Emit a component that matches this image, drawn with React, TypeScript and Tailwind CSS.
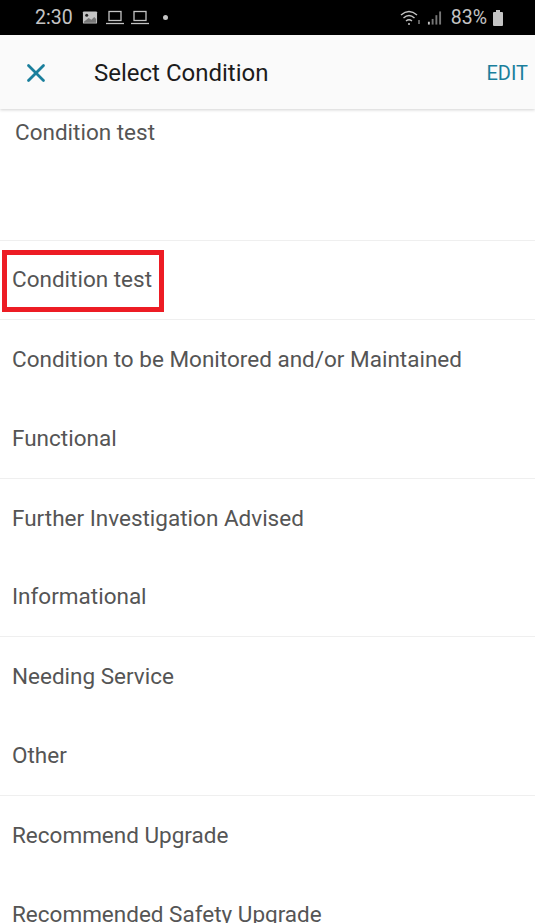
import { X } from "lucide-react";

const rows = [
  { label: "Condition test", line: true, boxed: true },
  { label: "Condition to be Monitored and/or Maintained", line: false },
  { label: "Functional", line: true },
  { label: "Further Investigation Advised", line: false },
  { label: "Informational", line: true },
  { label: "Needing Service", line: false },
  { label: "Other", line: true },
  { label: "Recommend Upgrade", line: false },
];

function StatusBar() {
  return (
    <div className="h-[35px] bg-black flex items-center text-[#c4c4c4] text-[19.5px] shrink-0">
      <span className="ml-[35px] w-[47px]">2:30</span>
      <svg width="16" height="15" viewBox="0 0 17 15">
        <rect x="1" y="1" width="15" height="13" rx="1" fill="#c4c4c4" />
        <circle cx="5" cy="5" r="1.6" fill="#222" />
        <path d="M2 12 L7 8 L10 10 L13 7 L15 9 V13 H2 Z" fill="#777" />
      </svg>
      <Laptop className="ml-[8px]" />
      <Laptop className="ml-[7px]" />
      <span className="ml-[14px] w-[5px] h-[5px] rounded-full bg-[#c4c4c4]" />
      <div className="ml-auto flex items-center">
        <svg width="22" height="18" viewBox="0 0 22 18" fill="none" stroke="#c4c4c4" strokeWidth="1.4">
          <path d="M1 6 Q9 -1 17 6" />
          <path d="M3.5 9 Q9 4 14.5 9" />
          <path d="M6 12 Q9 9.5 12 12" />
          <circle cx="9" cy="15" r="1" fill="#c4c4c4" stroke="none" />
          <path d="M19 11 V15" stroke="#888" />
        </svg>
        <svg width="15" height="16" viewBox="0 0 16 16" fill="#777" className="ml-[5px]">
          <rect x="1" y="12" width="2" height="3" fill="#c4c4c4" />
          <rect x="5" y="9" width="2" height="6" />
          <rect x="9" y="5" width="2" height="10" />
          <rect x="13" y="1" width="2" height="14" />
        </svg>
        <span className="ml-[9px]">83%</span>
        <svg width="12" height="16" viewBox="0 0 12 16" className="ml-[5px] mr-[31px]">
          <rect x="4" y="0" width="4" height="2" fill="#c4c4c4" />
          <rect x="1" y="2" width="10" height="14" rx="1" fill="#c4c4c4" />
        </svg>
      </div>
    </div>
  );
}

function Laptop({ className }: { className: string }) {
  return (
    <svg width="18" height="15" viewBox="0 0 18 15" fill="none" stroke="#c4c4c4" strokeWidth="1.3" className={className}>
      <rect x="3" y="1.5" width="12" height="9" />
      <path d="M0 13.5 H18" />
    </svg>
  );
}

export default function App() {
  return (
    <div
      className="relative w-[535px] h-[923px] overflow-hidden bg-white flex flex-col"
      style={{ fontFamily: "Roboto, 'Liberation Sans', sans-serif" }}
    >
      <StatusBar />
      <div className="h-[74px] pt-[2px] bg-[#fafafa] flex items-center shrink-0 shadow-[0_1px_3px_rgba(0,0,0,0.18)] z-10">
        <X className="ml-[21px] text-[#1a7f9c]" size={30} strokeWidth={2.2} />
        <span className="ml-[43px] text-[24px] text-[#1c1c1c]">Select Condition</span>
        <span className="ml-auto mr-[7px] text-[20px] text-[#1a7f9c]">EDIT</span>
      </div>
      <div className="h-[132px] shrink-0 border-b border-[#efefef] pl-[15px] pt-[9px] text-[22.5px] leading-[28px] text-[#555]">
        Condition test
      </div>
      {rows.map((row) => (
        <div
          key={row.label}
          className={`h-[79.3px] shrink-0 flex items-center pl-[12px] text-[22.5px] text-[#555] ${
            row.line ? "border-b border-[#efefef]" : ""
          }`}
        >
          {row.label}
        </div>
      ))}
      <div className="h-[48px] shrink-0 flex items-end pl-[12px] text-[22.5px] leading-[18px] text-[#555]">
        Recommended Safety Upgrade
      </div>
      <div className="absolute left-[2px] top-[250px] w-[162px] h-[62px] border-[5px] border-[#ed1c24]" />
    </div>
  );
}
